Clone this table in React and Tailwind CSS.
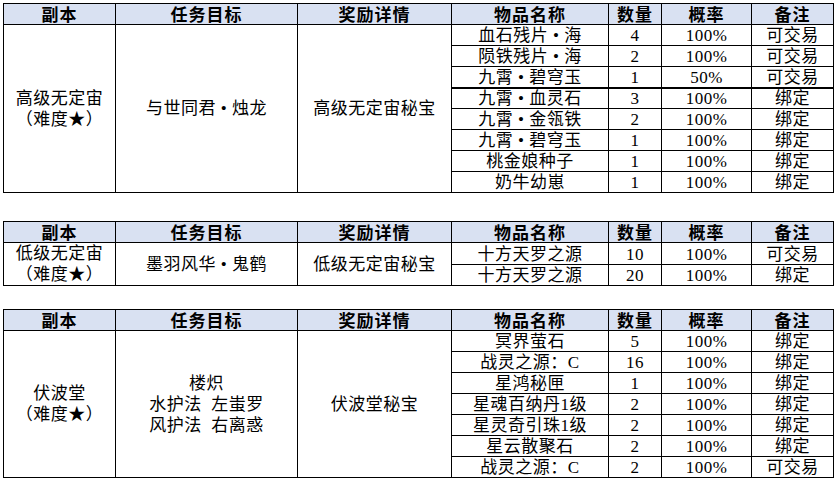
import React from 'react';

const tables = [
  {
    dungeon: ['高级无定宙', '（难度★）'],
    target: ['与世同君 • 烛龙'],
    reward: '高级无定宙秘宝',
    mt: 'mt-0',
    items: [
      ['血石残片 • 海', '4', '100%', '可交易'],
      ['陨铁残片 • 海', '2', '100%', '可交易'],
      ['九霄 • 碧穹玉', '1', '50%', '可交易'],
      ['九霄 • 血灵石', '3', '100%', '绑定', true],
      ['九霄 • 金瓴铁', '2', '100%', '绑定'],
      ['九霄 • 碧穹玉', '1', '100%', '绑定'],
      ['桃金娘种子', '1', '100%', '绑定'],
      ['奶牛幼崽', '1', '100%', '绑定'],
    ],
  },
  {
    dungeon: ['低级无定宙', '（难度★）'],
    target: ['墨羽风华 • 鬼鹤'],
    reward: '低级无定宙秘宝',
    mt: 'mt-[28px]',
    items: [
      ['十方天罗之源', '10', '100%', '可交易'],
      ['十方天罗之源', '20', '100%', '绑定'],
    ],
  },
  {
    dungeon: ['伏波堂', '（难度★）'],
    target: ['楼炽', '水护法  左蚩罗', '风护法  右离惑'],
    reward: '伏波堂秘宝',
    mt: 'mt-[23px]',
    items: [
      ['冥界萤石', '5', '100%', '绑定'],
      ['战灵之源：C', '16', '100%', '绑定'],
      ['星鸿秘匣', '1', '100%', '绑定'],
      ['星魂百纳丹1级', '2', '100%', '绑定'],
      ['星灵奇引珠1级', '2', '100%', '绑定'],
      ['星云散聚石', '2', '100%', '绑定'],
      ['战灵之源：C', '2', '100%', '可交易'],
    ],
  },
];

const headers = ['副本', '任务目标', '奖励详情', '物品名称', '数量', '概率', '备注'];

const DropTable = ({ data }) => {
  const span = data.items.length;
  return (
    <table className={`${data.mt} w-[830px] table-fixed border-collapse text-black`}>
      <colgroup>
        <col className="w-[112px]" />
        <col className="w-[182px]" />
        <col className="w-[154px]" />
        <col className="w-[157px]" />
        <col className="w-[53px]" />
        <col className="w-[90px]" />
        <col className="w-[82px]" />
      </colgroup>
      <thead>
        <tr className="h-[21px]">
          {headers.map((h) => (
            <th
              key={h}
              className="border border-black bg-[#d9e1f2] p-0 text-center align-bottom font-['Noto_Sans_CJK_SC',sans-serif] text-[17px] font-bold leading-[20px] tracking-[1px]"
            >
              {h}
            </th>
          ))}
        </tr>
      </thead>
      <tbody className="font-['Liberation_Serif','Noto_Sans_CJK_SC',serif] text-[17px] tracking-[0.5px]">
        {data.items.map((it, i) => {
          const thick = it[4] ? 'border-t-2' : '';
          return (
            <tr key={i} className="h-[21px]">
              {i === 0 && (
                <>
                  <td rowSpan={span} className="border border-black p-0 text-center align-middle leading-[21px]">
                    {data.dungeon.map((l) => (
                      <div key={l}>{l}</div>
                    ))}
                  </td>
                  <td rowSpan={span} className="border border-black p-0 text-center align-middle leading-[21px] whitespace-pre">
                    {data.target.map((l) => (
                      <div key={l}>{l}</div>
                    ))}
                  </td>
                  <td rowSpan={span} className="border border-black p-0 text-center align-middle leading-[21px]">
                    {data.reward}
                  </td>
                </>
              )}
              {it.slice(0, 4).map((v, j) => (
                <td key={j} className={`border border-black ${thick} p-0 text-center align-bottom leading-[19px] whitespace-nowrap`}>
                  {v}
                </td>
              ))}
            </tr>
          );
        })}
      </tbody>
    </table>
  );
};

export default function App() {
  return (
    <div className="h-[482px] w-[838px] bg-white pl-[3px] pt-[3px]">
      {tables.map((t, i) => (
        <DropTable key={i} data={t} />
      ))}
    </div>
  );
}
